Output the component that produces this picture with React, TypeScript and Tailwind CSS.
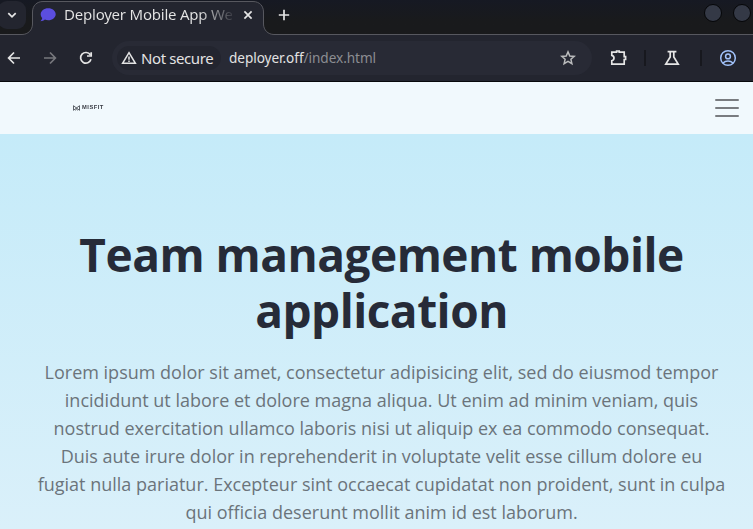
import React from "react";

const uiFont = "font-['Noto_Sans','Open_Sans',sans-serif]";

function TabStrip() {
  return (
    <div className="relative flex h-[35px] items-start bg-linear-to-b from-[#161923] to-[#191a1c] to-60%">
      <svg className="absolute inset-0" width="753" height="35" fill="none">
        <path d="M0 34.5H22C28 34.5 32.5 30 32.5 24V12C32.5 5.5 37 1.5 43 1.5H253C259.5 1.5 263.5 6 263.5 12V24C263.5 30 268 34.5 274 34.5H753V36H0Z" fill="#23252f" />
        <path d="M0 34.5H22C28 34.5 32.5 30 32.5 24V12C32.5 5.5 37 1.5 43 1.5H253C259.5 1.5 263.5 6 263.5 12V24C263.5 30 268 34.5 274 34.5H753" stroke="#57585f" />
      </svg>
      <button className="relative -ml-0.5 mt-px flex h-7 w-7 items-center justify-center rounded-[9px] bg-[#23252f]">
        <svg width="28" height="28" fill="none" stroke="#e6e6e6" strokeWidth="1.7"><path d="M10.3 12.2L14 15.9L17.7 12.2" /></svg>
      </button>
      <div className="relative ml-[14px] flex h-[30px] w-[216px] items-center">
        <svg width="16" height="16" viewBox="0 0 16 16" fill="#5b4ee0" className="-mt-px shrink-0">
          <path d="M8.2 1.2C12.5 1.2 15.7 3.9 15.7 7.2S12.5 13.2 8.2 13.2C7 13.2 5.9 13 4.9 12.6C3.8 13.6 2.3 14.2.4 14.2C1.4 13.2 2.1 12.2 2.2 11C1.2 10 .7 8.7.7 7.2C.7 3.9 4 1.2 8.2 1.2Z" />
        </svg>
        <span className="-mt-0.5 ml-2 w-[168px] whitespace-nowrap bg-linear-to-r from-[#e5e5e5] from-80% to-[#e5e5e520] bg-clip-text text-[15px] leading-5 tracking-[-0.22px] text-transparent">Deployer Mobile App We</span>
        <svg width="10" height="10" className="ml-[11px] shrink-0" fill="none" stroke="#e5e5e5" strokeWidth="1.7"><path d="M1.4 1.4L8.6 8.6M8.6 1.4L1.4 8.6" /></svg>
      </div>
      <svg width="12" height="12" className="relative ml-[22px] mt-[9px]" fill="none" stroke="#e5e5e5" strokeWidth="1.7"><path d="M6 .8V11.2M.8 6H11.2" /></svg>
      <div className="relative ml-auto mr-0.5 mt-1 flex gap-[11px]">
        <i className="size-[18px] rounded-full border border-[#050608] bg-[#343946]" />
        <i className="size-[18px] rounded-full border border-[#050608] bg-[#343946]" />
      </div>
    </div>
  );
}

function Toolbar() {
  return (
    <div className="flex h-[47px] items-center border-b border-[#08090c] bg-[#23252f]">
      <svg width="96" height="46" className="shrink-0" fill="none" strokeWidth="1.7" stroke="#e6e6e6">
        <path d="M20 23H9M14 17.5L8.6 23L14 28.5" />
        <path stroke="#77787d" d="M44 23H55.2M50 17.5L55.4 23L50 28.5" />
        <path d="M90.3 19.8A5.3 5.3 0 1 0 91 24.3M91.2 17.2V21H87" />
      </svg>
      <div className="ml-4 flex h-[34px] w-[480px] items-center rounded-full bg-[#282a35] pl-[5px]">
        <div className="flex h-6 w-[104px] items-center rounded-full bg-[#23252f] pl-1">
          <svg width="16" height="16" fill="none" stroke="#e3e3e3" strokeWidth="1.5"><path d="M8 2.6L14.4 13.3H1.6Z" /><path d="M8 6.6V9.7M8 10.6V12" /></svg>
          <span className="-mt-px ml-1 whitespace-nowrap text-[15px] leading-5 tracking-[-0.4px] text-[#e3e3e3]">Not secure</span>
        </div>
        <span className="ml-2 mt-px whitespace-nowrap text-[13.6px] tracking-[-0.05px] text-[#e3e3e3]">deployer.off<span className="text-[#8c8d92]">/index.html</span></span>
        <svg className="ml-auto mr-4" width="16" height="16" fill="none" stroke="#bbbcbd" strokeWidth="1.5"><path d="M8 1.9L9.8 6L14.2 6.4L10.9 9.3L11.9 13.7L8 11.4L4.1 13.7L5.1 9.3L1.8 6.4L6.2 6Z" /></svg>
      </div>
      <svg width="161" height="46" className="shrink-0" fill="none" stroke="#e6e6e6" strokeWidth="1.7">
        <path d="M19.8 17.1H24.6V16H27.2V17.1H32.2V21.7H33.6V24.5H32.2V29.1H19.8V25.8C21.2 25.5 22 24.5 22 23.1S21.2 20.7 19.8 20.4Z" />
        <path d="M53 15V31M109 15V31" stroke="#17181e" strokeWidth="2" />
        <path d="M75.6 16.7H84.4M78.2 17V22L73.8 29.1H86.2L81.8 22V17" />
        <g stroke="#a1c2fa" strokeWidth="1.5"><circle cx="136" cy="23" r="7.3" /><circle cx="136" cy="21.4" r="2.4" /><path d="M131 28C132.4 26.7 134 26.1 136 26.1S139.6 26.7 141 28" /></g>
      </svg>
    </div>
  );
}

function SiteHeader() {
  return (
    <header className="flex h-[52px] items-center justify-between bg-[#f1f9fd] pl-[73px] pr-3.5">
      <div className="flex items-center text-[#3a3d45]">
        <svg width="7" height="6" fill="none" stroke="currentColor" strokeWidth=".8"><path d="M.5 .7V5.3L6.5 .7V5.3L.5 .7M2.2 5.3L3.5 4.2L4.8 5.3" /></svg>
        <span className="ml-0.5 origin-left scale-x-125 font-['Liberation_Sans',sans-serif] text-[4.6px] font-bold leading-[6px] tracking-[0.4px]">MISFIT</span>
      </div>
      <button className="flex w-6 flex-col gap-1.5">
        <i className="h-0.5 rounded bg-[#797c80]" />
        <i className="h-0.5 rounded bg-[#797c80]" />
        <i className="h-0.5 rounded bg-[#797c80]" />
      </button>
    </header>
  );
}

const lines = [
  "Lorem ipsum dolor sit amet, consectetur adipisicing elit, sed do eiusmod tempor",
  "incididunt ut labore et dolore magna aliqua. Ut enim ad minim veniam, quis",
  "nostrud exercitation ullamco laboris nisi ut aliquip ex ea commodo consequat.",
  "Duis aute irure dolor in reprehenderit in voluptate velit esse cillum dolore eu",
  "fugiat nulla pariatur. Excepteur sint occaecat cupidatat non proident, sunt in culpa",
  "qui officia deserunt mollit anim id est laborum.",
];

export default function App() {
  return (
    <div className={`flex h-[529px] w-[753px] flex-col overflow-hidden ${uiFont}`}>
      <TabStrip />
      <Toolbar />
      <SiteHeader />
      <main className="flex-1 bg-linear-to-b from-[#c5ebf9] to-[#daf0fa] pl-[10px] pt-[92px] text-center font-['Open_Sans',sans-serif]">
        <h1 className="text-[46px] font-bold leading-[56px] tracking-[-0.5px] text-[#262b38]">Team management mobile<br />application</h1>
        <p className="mt-5 whitespace-nowrap text-[18px] leading-7 text-[#6b747b]">
          {lines.map((line) => <span key={line} className="block">{line}</span>)}
        </p>
      </main>
    </div>
  );
}
